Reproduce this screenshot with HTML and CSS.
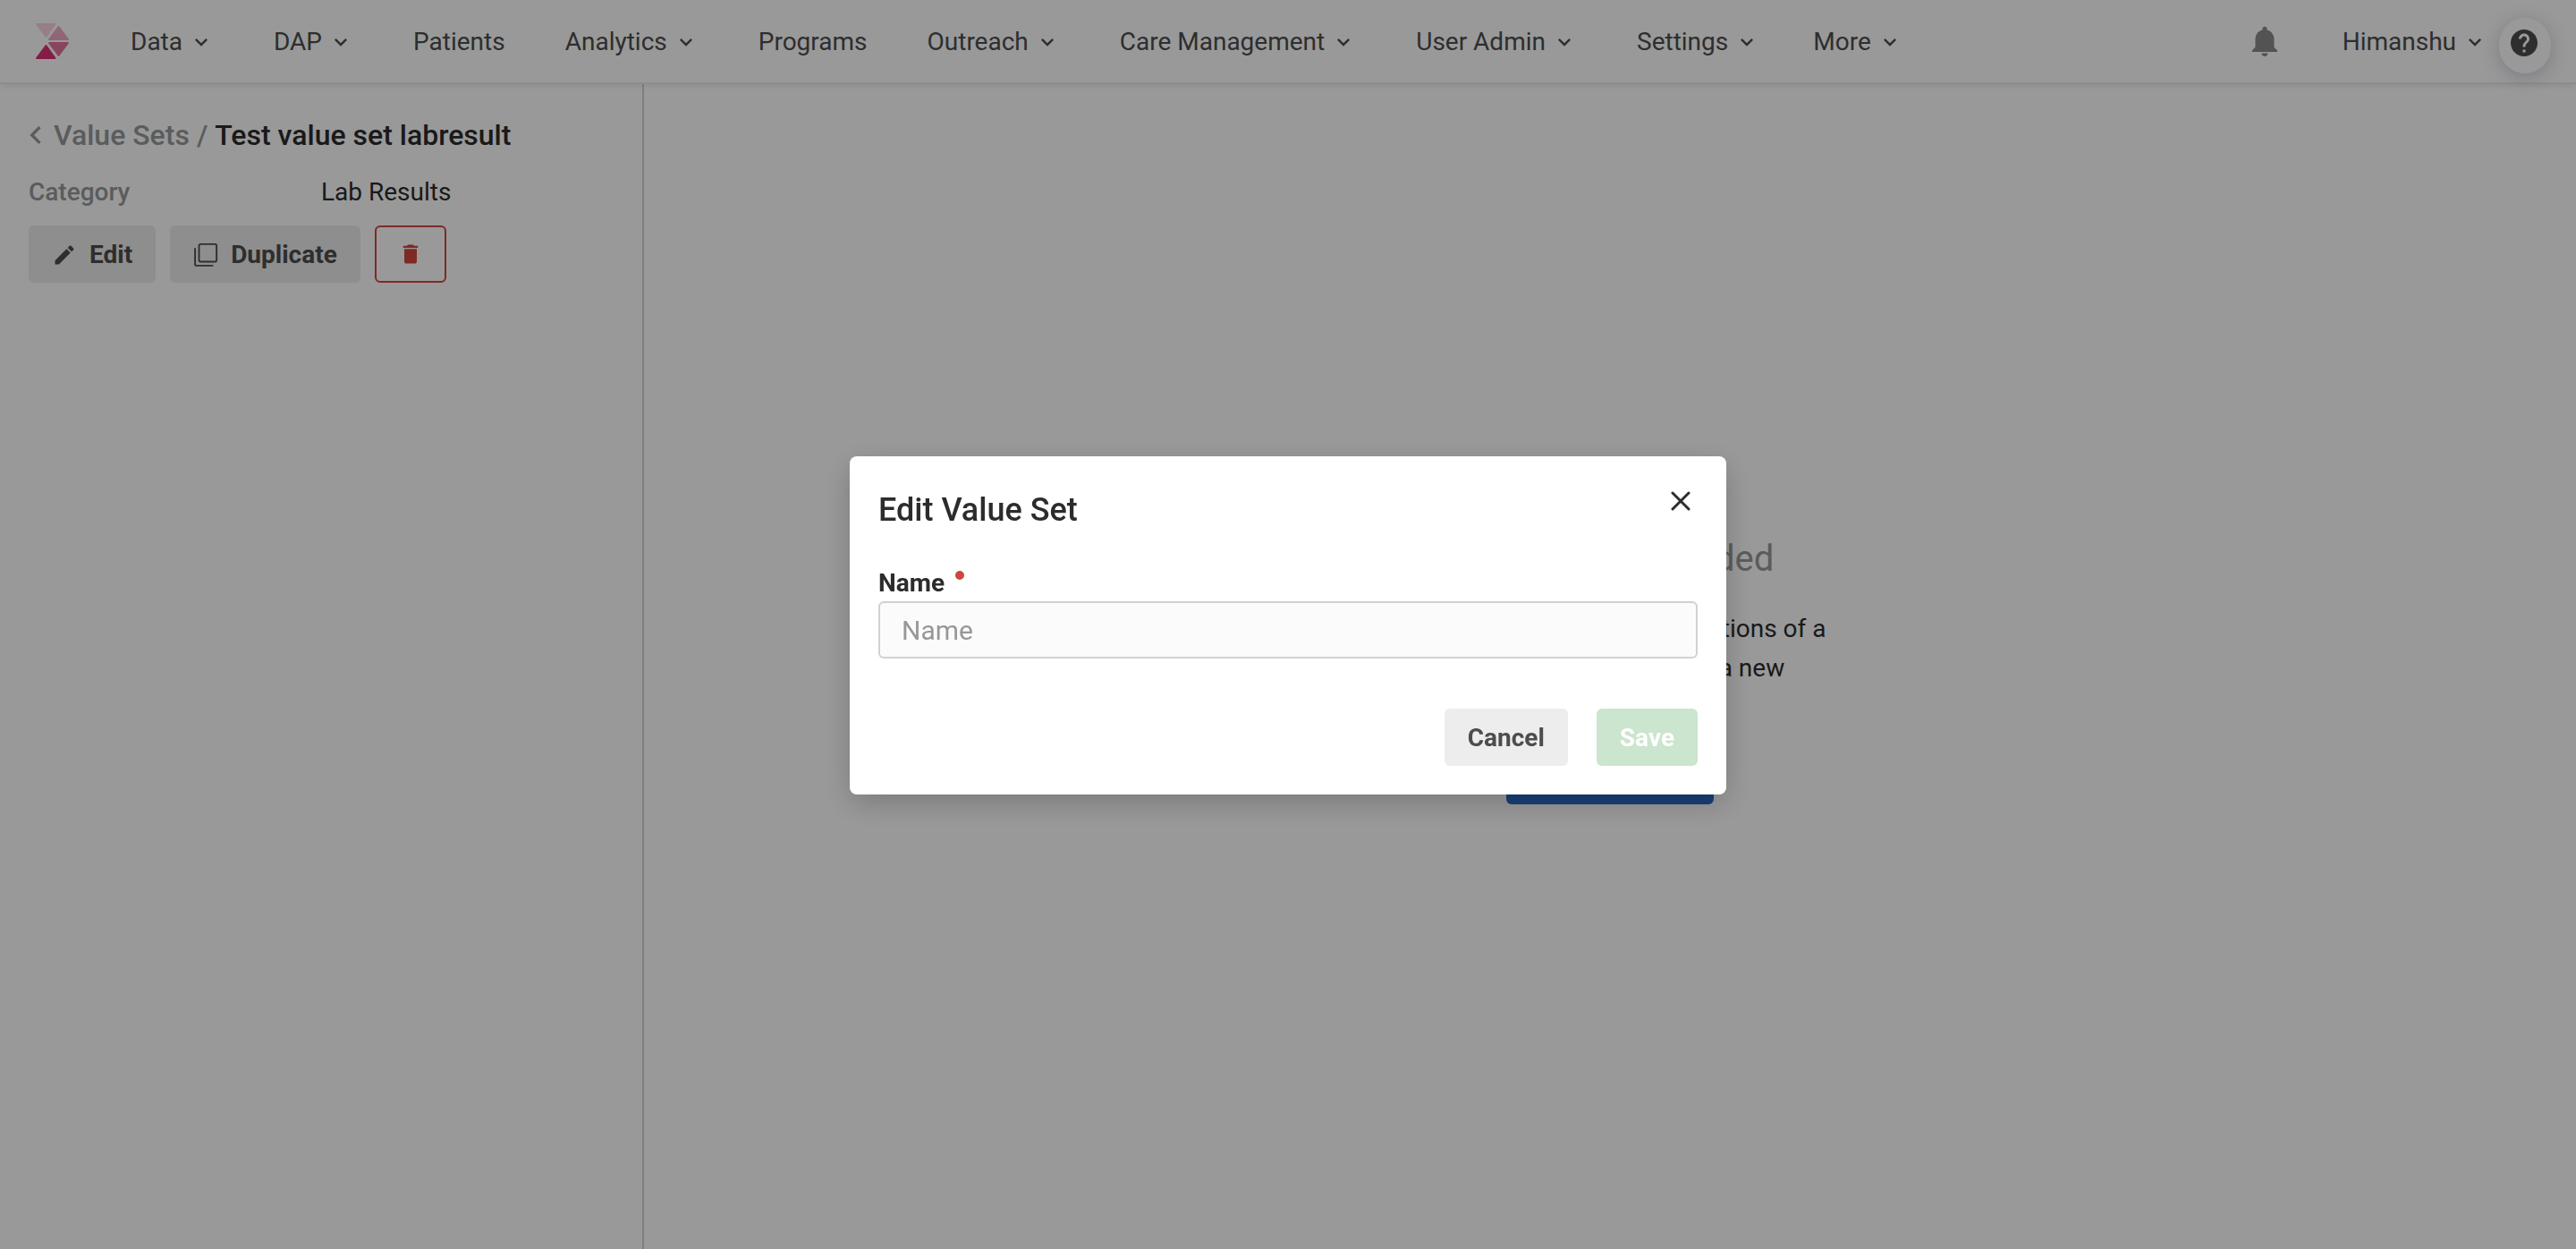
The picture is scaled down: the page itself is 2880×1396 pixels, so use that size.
FILE: index.html
```html
<!DOCTYPE html>
<html lang="en">
<head>
<meta charset="utf-8">
<meta name="viewport" content="width=device-width, initial-scale=1">
<title>Edit Value Set</title>
<link rel="stylesheet" href="styles.css">
</head>
<body>
<svg class="sprite" aria-hidden="true">
  <symbol id="chevron" viewBox="0 0 24 24"><path d="M7.41 8.59 12 13.17l4.59-4.58L18 10l-6 6-6-6z"/></symbol>
</svg>

<header class="topbar">
  <a class="logo" href="#" aria-label="Home">
    <svg viewBox="0 1 40 42" width="40" height="42">
      <g stroke-width="2" stroke-linejoin="round">
        <path fill="#fad4e1" stroke="#fad4e1" d="M3 3h20.500l-10 14z"/>
        <path fill="#f0abc5" stroke="#f0abc5" d="M27.500 6 38 20H17z"/>
        <path fill="#e5749f" stroke="#e5749f" d="M17 24h21l-10.500 14z"/>
        <path fill="#dc2f78" stroke="#dc2f78" d="M13.500 27l10 14H3z"/>
      </g>
    </svg>
  </a>
  <nav class="nav" aria-label="Main">
    <div class="menu">
      <a href="#">Data <svg class="caret"><use href="#chevron"/></svg></a>
      <a href="#">DAP <svg class="caret"><use href="#chevron"/></svg></a>
      <a href="#">Patients</a>
      <a href="#">Analytics <svg class="caret"><use href="#chevron"/></svg></a>
      <a href="#">Programs</a>
      <a href="#">Outreach <svg class="caret"><use href="#chevron"/></svg></a>
      <a href="#">Care Management <svg class="caret"><use href="#chevron"/></svg></a>
      <a href="#">User Admin <svg class="caret"><use href="#chevron"/></svg></a>
      <a href="#">Settings <svg class="caret"><use href="#chevron"/></svg></a>
    </div>
    <div class="menu">
      <a href="#">More <svg class="caret"><use href="#chevron"/></svg></a>
    </div>
  </nav>
  <button class="bell" type="button" aria-label="Notifications">
    <svg viewBox="4 2 16 20" width="28" height="34" preserveAspectRatio="none"><path d="M18 17v-6c0-3.070-1.640-5.640-4.500-6.320V4c0-.830-.670-1.500-1.500-1.500s-1.500.670-1.500 1.500v.680C7.630 5.360 6 7.920 6 11v5l-2 2v1h16v-1l-2-2zM12 22c1.100 0 2-.9 2-2h-4c0 1.100.890 2 2 2z"/></svg>
  </button>
  <a class="user" href="#">Himanshu <svg class="caret"><use href="#chevron"/></svg></a>
  <button class="help" type="button" aria-label="Help">
    <svg viewBox="2 2 20 20" width="30" height="30"><path d="M12 2C6.480 2 2 6.480 2 12s4.480 10 10 10 10-4.480 10-10S17.520 2 12 2zm1 17h-2v-2h2v2zm2.070-7.750-.9.920C13.450 12.900 13 13.500 13 15h-2v-.5c0-1.100.450-2.100 1.170-2.830l1.240-1.260c.370-.360.590-.860.590-1.410 0-1.100-.9-2-2-2s-2 .9-2 2H8c0-2.210 1.790-4 4-4s4 1.790 4 4c0 .880-.360 1.680-.930 2.250z"/></svg>
  </button>
</header>

<main class="layout">
  <aside class="side">
    <h1 class="crumbs">
      <a href="#"><svg class="back" viewBox="8 6 8 12" width="14" height="20"><path d="M15.410 7.410 10.830 12l4.580 4.590L14 18l-6-6 6-6z"/></svg>Value Sets</a>
      <span class="slash">/</span>
      <span>Test value set labresult</span>
    </h1>
    <dl class="facts">
      <dt>Category</dt>
      <dd>Lab Results</dd>
    </dl>
    <div class="actions">
      <button class="btn" type="button">
        <svg viewBox="0 0 24 24" width="28" height="28"><path d="M3 17.250V21h3.750L17.810 9.940l-3.750-3.750L3 17.250zM20.710 7.040c.390-.390.390-1.020 0-1.410l-2.340-2.340c-.390-.390-1.020-.390-1.410 0l-1.830 1.830 3.750 3.750 1.830-1.830z"/></svg>
        Edit
      </button>
      <button class="btn" type="button">
        <svg class="outline" viewBox="0 0 24 24" width="28" height="28"><rect x="5.600" y="1.600" width="16.800" height="16.800" rx="1.500"/><path d="M1.800 6v14.700a1.500 1.500 0 0 0 1.500 1.500H18.500"/></svg>
        Duplicate
      </button>
      <button class="btn btn-delete" type="button" aria-label="Delete">
        <svg viewBox="0 0 24 24" width="28" height="28"><path d="M6 19c0 1.100.9 2 2 2h8c1.100 0 2-.9 2-2V7H6v12zM19 4h-3.500l-1-1h-5l-1 1H5v2h14V4z"/></svg>
      </button>
    </div>
  </aside>
  <section class="empty">
    <h2>No Value sets added</h2>
    <p>Value sets are made of collections of a<br>code system. Begin from a new<br>value</p>
    <button class="btn btn-primary" type="button">Add Value</button>
  </section>
</main>

<div class="overlay">
  <form class="dialog" role="dialog" aria-modal="true" aria-labelledby="dialog-title">
    <div class="dialog-head">
      <h2 id="dialog-title">Edit Value Set</h2>
      <button class="close" type="button" aria-label="Close">
        <svg class="cross" viewBox="0 0 22 22" width="22" height="22"><path d="M2 2l18 18M20 2 2 20"/></svg>
      </button>
    </div>
    <label class="label" for="name">Name <span class="required"></span></label>
    <input class="input" id="name" type="text" placeholder="Name">
    <div class="dialog-foot">
      <button class="btn" type="button">Cancel</button>
      <button class="btn btn-save" type="submit" disabled>Save</button>
    </div>
  </form>
</div>
</body>
</html>
```
FILE: styles.css
```css
*,
*::before,
*::after {
  box-sizing: border-box;
}

body {
  margin: 0;
  min-height: 100vh;
  display: flex;
  flex-direction: column;
  background: #fff;
  color: #2c2c2c;
  font: 400 28px/44px Roboto, sans-serif;
}

h1,
h2,
p,
dl,
dd {
  margin: 0;
}

a {
  color: inherit;
  text-decoration: none;
}

button,
input {
  font: inherit;
  color: inherit;
}

svg {
  flex: none;
  fill: currentColor;
}

.sprite {
  display: none;
}

.outline {
  fill: none;
  stroke: currentColor;
  stroke-width: 1.6;
  stroke-linecap: round;
}

.cross {
  stroke: currentColor;
  stroke-width: 3;
  stroke-linecap: round;
}

/* Top bar */
.topbar {
  position: relative;
  display: flex;
  align-items: center;
  height: 94px;
  padding: 0 28px 0 38px;
  border-bottom: 2px solid #ebebeb;
  box-shadow: 0 2px 6px rgba(0, 0, 0, 0.08);
  color: #4d4d4d;
}

.logo {
  display: flex;
  margin-right: 68px;
}

.nav {
  display: flex;
  gap: 60px;
  margin-right: auto;
}

.menu {
  display: flex;
  gap: 67px;
}

.menu a,
.user {
  display: flex;
  align-items: center;
  gap: 7px;
  padding-top: 2px;
  white-space: nowrap;
}

.caret {
  width: 28px;
  height: 28px;
}

.bell {
  display: flex;
  padding: 0;
  margin-right: 73px;
  border: 0;
  background: none;
  color: #8a8a8a;
}

.help {
  display: flex;
  align-items: center;
  justify-content: center;
  width: 58px;
  height: 62px;
  margin: 10px 0 0 13px;
  padding: 0 2px 6px 0;
  border: 0;
  border-radius: 29px;
  background: #fff;
  box-shadow: 0 4px 20px rgba(50, 65, 105, 0.25);
}

/* Page */
.layout {
  flex: 1;
  display: flex;
}

.side {
  width: 25%;
  padding: 35px 32px;
  border-right: 2px solid #d3d3d3;
}

.crumbs {
  display: flex;
  gap: 8px;
  font-size: 32px;
  font-weight: 500;
}

.crumbs a {
  display: flex;
  align-items: center;
  gap: 13px;
  padding-left: 1px;
}

.crumbs a,
.slash,
.facts dt {
  color: #97999c;
}

.facts {
  display: grid;
  grid-template-columns: 1fr 1fr;
  margin: 20px 0 15px;
}

.facts dt {
  font-weight: 500;
}

.actions {
  display: flex;
  gap: 16px;
}

.btn {
  display: flex;
  align-items: center;
  justify-content: center;
  gap: 14px;
  height: 64px;
  padding: 2px 26px 0;
  border: 0;
  border-radius: 6px;
  background: #ededed;
  color: #4d4d4d;
  font-weight: 700;
}

.btn-delete {
  width: 80px;
  padding: 0;
  border: 2px solid #d14640;
  background: none;
  color: #d14640;
}

.btn-primary {
  width: 232px;
  background: #2969c7;
  color: #fff;
}

.empty {
  flex: 1;
  display: flex;
  flex-direction: column;
  align-items: center;
  justify-content: center;
  padding-top: 6px;
  text-align: center;
}

.empty h2 {
  color: #97999c;
  font-size: 40px;
  font-weight: 400;
  line-height: 56px;
}

.empty p {
  margin: 28px 0 22px;
}

/* Dialog */
.overlay {
  position: fixed;
  inset: 0;
  display: flex;
  align-items: center;
  justify-content: center;
  padding-top: 2px;
  background: rgba(0, 0, 0, 0.4);
}

.dialog {
  width: 980px;
  max-width: 100%;
  padding: 32px;
  border-radius: 8px;
  background: #fff;
  box-shadow: 0 10px 32px rgba(0, 0, 0, 0.2);
}

.dialog-head {
  display: flex;
  align-items: flex-start;
  justify-content: space-between;
}

.dialog-head h2 {
  font-size: 36px;
  font-weight: 500;
  line-height: 56px;
}

.close {
  display: flex;
  padding: 7px 8px;
  border: 0;
  background: none;
}

.label {
  display: flex;
  gap: 12px;
  margin-top: 34px;
  font-weight: 700;
  line-height: 40px;
}

.required {
  width: 10px;
  height: 10px;
  margin-top: 6px;
  border-radius: 50%;
  background: #cb4840;
}

.input {
  display: block;
  width: 100%;
  height: 64px;
  padding: 0 24px;
  border: 2px solid #d1d1d1;
  border-radius: 6px;
  background: #fbfbfb;
  font-size: 30px;
}

.input::placeholder {
  color: #979797;
  opacity: 1;
}

.dialog-foot {
  display: flex;
  justify-content: flex-end;
  gap: 32px;
  margin-top: 56px;
}

.btn-save {
  background: #cce5ce;
  color: #fff;
}
```
